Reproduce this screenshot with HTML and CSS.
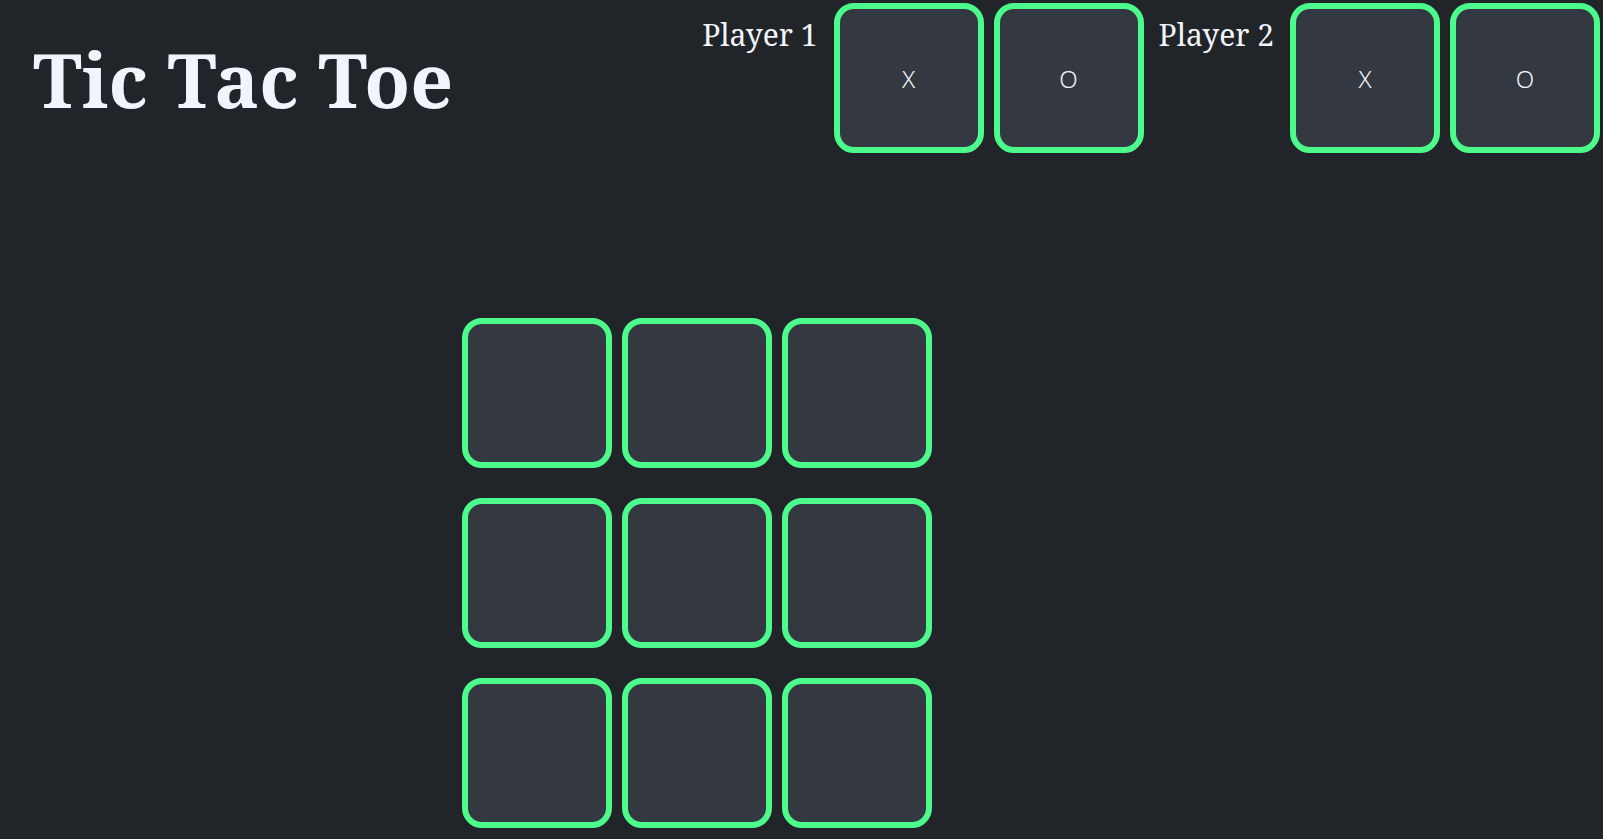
FILE: index.html
```html
<!DOCTYPE html>
<html>
<head>
<meta charset="utf-8">
<title>Tic Tac Toe</title>
<link rel="stylesheet" href="styles.css">
</head>
<body>
<header class="header">
  <h1 class="title">Tic Tac Toe</h1>
  <div class="players">
    <div class="player">
      <span class="player-label">Player 1</span>
      <button class="pick">X</button>
      <button class="pick">O</button>
    </div>
    <div class="player">
      <span class="player-label">Player 2</span>
      <button class="pick">X</button>
      <button class="pick">O</button>
    </div>
  </div>
</header>
<main class="board">
  <button class="cell"></button>
  <button class="cell"></button>
  <button class="cell"></button>
  <button class="cell"></button>
  <button class="cell"></button>
  <button class="cell"></button>
  <button class="cell"></button>
  <button class="cell"></button>
  <button class="cell"></button>
</main>
</body>
</html>
```

FILE: styles.css
```css
html, body {
  margin: 0;
  padding: 0;
  background: #212429;
  height: 100%;
}

body {
  font-family: "Noto Serif", "DejaVu Serif", serif;
  color: #f1f5fb;
  overflow: hidden;
}

.header {
  display: flex;
  align-items: flex-start;
  padding: 3px 3px 0 33px;
}

.title {
  margin: 39px 0 0 0;
  font-size: 75px;
  font-weight: 700;
  line-height: 1;
  color: #f1f5fb;
}

.players {
  margin-left: auto;
  display: flex;
  align-items: flex-start;
  gap: 15px;
}

.player {
  display: flex;
  align-items: flex-start;
  gap: 10px;
}

.player-label {
  font-size: 30px;
  line-height: 1;
  padding-top: 17px;
  margin-right: 6px;
  white-space: nowrap;
}

.pick {
  box-sizing: border-box;
  width: 150px;
  height: 150px;
  flex-shrink: 0;
  background: #343841;
  border: 6px solid #4cfb8c;
  border-radius: 20px;
  color: #eef2f8;
  font-family: "Noto Sans", "Open Sans", sans-serif;
  font-size: 24px;
  font-weight: 300;
  padding: 0;
}

.board {
  display: grid;
  grid-template-columns: repeat(3, 150px);
  grid-auto-rows: 150px;
  column-gap: 10px;
  row-gap: 30px;
  margin: 165px 0 0 462px;
}

.cell {
  box-sizing: border-box;
  background: #343841;
  border: 6px solid #4cfb8c;
  border-radius: 20px;
  padding: 0;
}
```
